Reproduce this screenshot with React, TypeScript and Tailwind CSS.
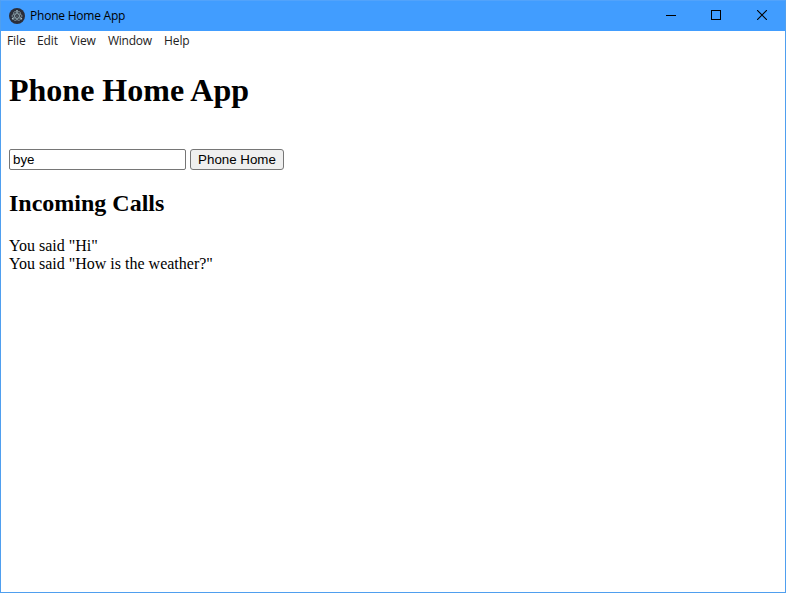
import { useState } from "react";

const menus = [
  { label: "File", width: "w-[30px]" },
  { label: "Edit", width: "w-[33px]" },
  { label: "View", width: "w-[38px]" },
  { label: "Window", width: "w-[56px] tracking-[-0.25px]" },
  { label: "Help", width: "w-[40px]" },
];

const calls = ['You said "Hi"', 'You said "How is the weather?"'];

function AppIcon() {
  return (
    <svg width="16" height="16" viewBox="0 0 16 16" fill="none" aria-hidden="true">
      <circle cx="8" cy="8" r="8" fill="#2b2e3a" />
      <g stroke="#a9c4cc" strokeWidth="0.7" opacity="0.85">
        <ellipse cx="8" cy="8" rx="5" ry="2.2" />
        <ellipse cx="8" cy="8" rx="5" ry="2.2" transform="rotate(60 8 8)" />
        <ellipse cx="8" cy="8" rx="5" ry="2.2" transform="rotate(120 8 8)" />
      </g>
      <g fill="#b5ced5">
        <circle cx="8" cy="8" r="0.6" />
        <circle cx="3.6" cy="10.8" r="0.8" />
        <circle cx="12.4" cy="10.8" r="0.8" />
        <circle cx="8" cy="2.9" r="0.8" />
      </g>
    </svg>
  );
}

function TitleBar() {
  return (
    <header className="flex h-[30px] items-center bg-[#419dff] pl-2 text-black">
      <AppIcon />
      <span className="ml-[5px] whitespace-nowrap font-['Open_Sans','Noto_Sans',sans-serif] text-[12px] leading-4 tracking-[-0.22px]">
        Phone Home App
      </span>
      <div className="ml-auto flex h-full pb-0.5">
        <button aria-label="Minimize" className="flex h-full w-[46px] items-center justify-center">
          <svg width="10" height="10" shapeRendering="crispEdges">
            <path d="M0 5.5H10" stroke="#000" />
          </svg>
        </button>
        <button aria-label="Maximize" className="flex h-full w-[44px] items-center justify-center">
          <svg width="10" height="10" fill="none" shapeRendering="crispEdges">
            <rect x="0.5" y="0.5" width="9" height="9" stroke="#000" />
          </svg>
        </button>
        <button aria-label="Close" className="flex h-full w-[47px] items-center justify-center pl-px">
          <svg width="10" height="10">
            <path d="M0 0L10 10M10 0L0 10" stroke="#000" strokeWidth="1.1" />
          </svg>
        </button>
      </div>
    </header>
  );
}

export default function App() {
  const [message, setMessage] = useState("bye");
  return (
    <div className="flex h-[593px] w-[786px] flex-col overflow-hidden border border-[#4f9fef] border-t-[#52a3fb] bg-white">
      <TitleBar />
      <nav className="flex h-5 shrink-0 items-center pl-1.5 font-['Open_Sans','Noto_Sans',sans-serif] text-[12px] leading-4 tracking-[-0.1px] text-[#222]">
        {menus.map((menu) => (
          <span key={menu.label} className={menu.width}>
            {menu.label}
          </span>
        ))}
      </nav>
      <main className="px-2 font-['Liberation_Serif',serif] text-[16px] leading-[18px] text-black">
        <h1 className="mt-[21px] text-[32px] font-bold leading-9">Phone Home App</h1>
        <div className="mt-[41px] flex gap-1 font-['Liberation_Sans',sans-serif] text-[13.333px]">
          <input
            value={message}
            onChange={(event) => setMessage(event.target.value)}
            className="h-[21px] w-[177px] rounded-[2px] border border-[#767676] bg-white px-[3px] py-0 leading-[15px] outline-none"
          />
          <button className="h-[21px] w-[94px] whitespace-nowrap rounded-[3px] border border-[#767676] bg-[#efefef] leading-[15px]">
            Phone Home
          </button>
        </div>
        <h2 className="mt-5 text-[24px] font-bold leading-[27px]">Incoming Calls</h2>
        <div className="mt-5">
          {calls.map((call) => (
            <p key={call}>{call}</p>
          ))}
        </div>
      </main>
    </div>
  );
}
